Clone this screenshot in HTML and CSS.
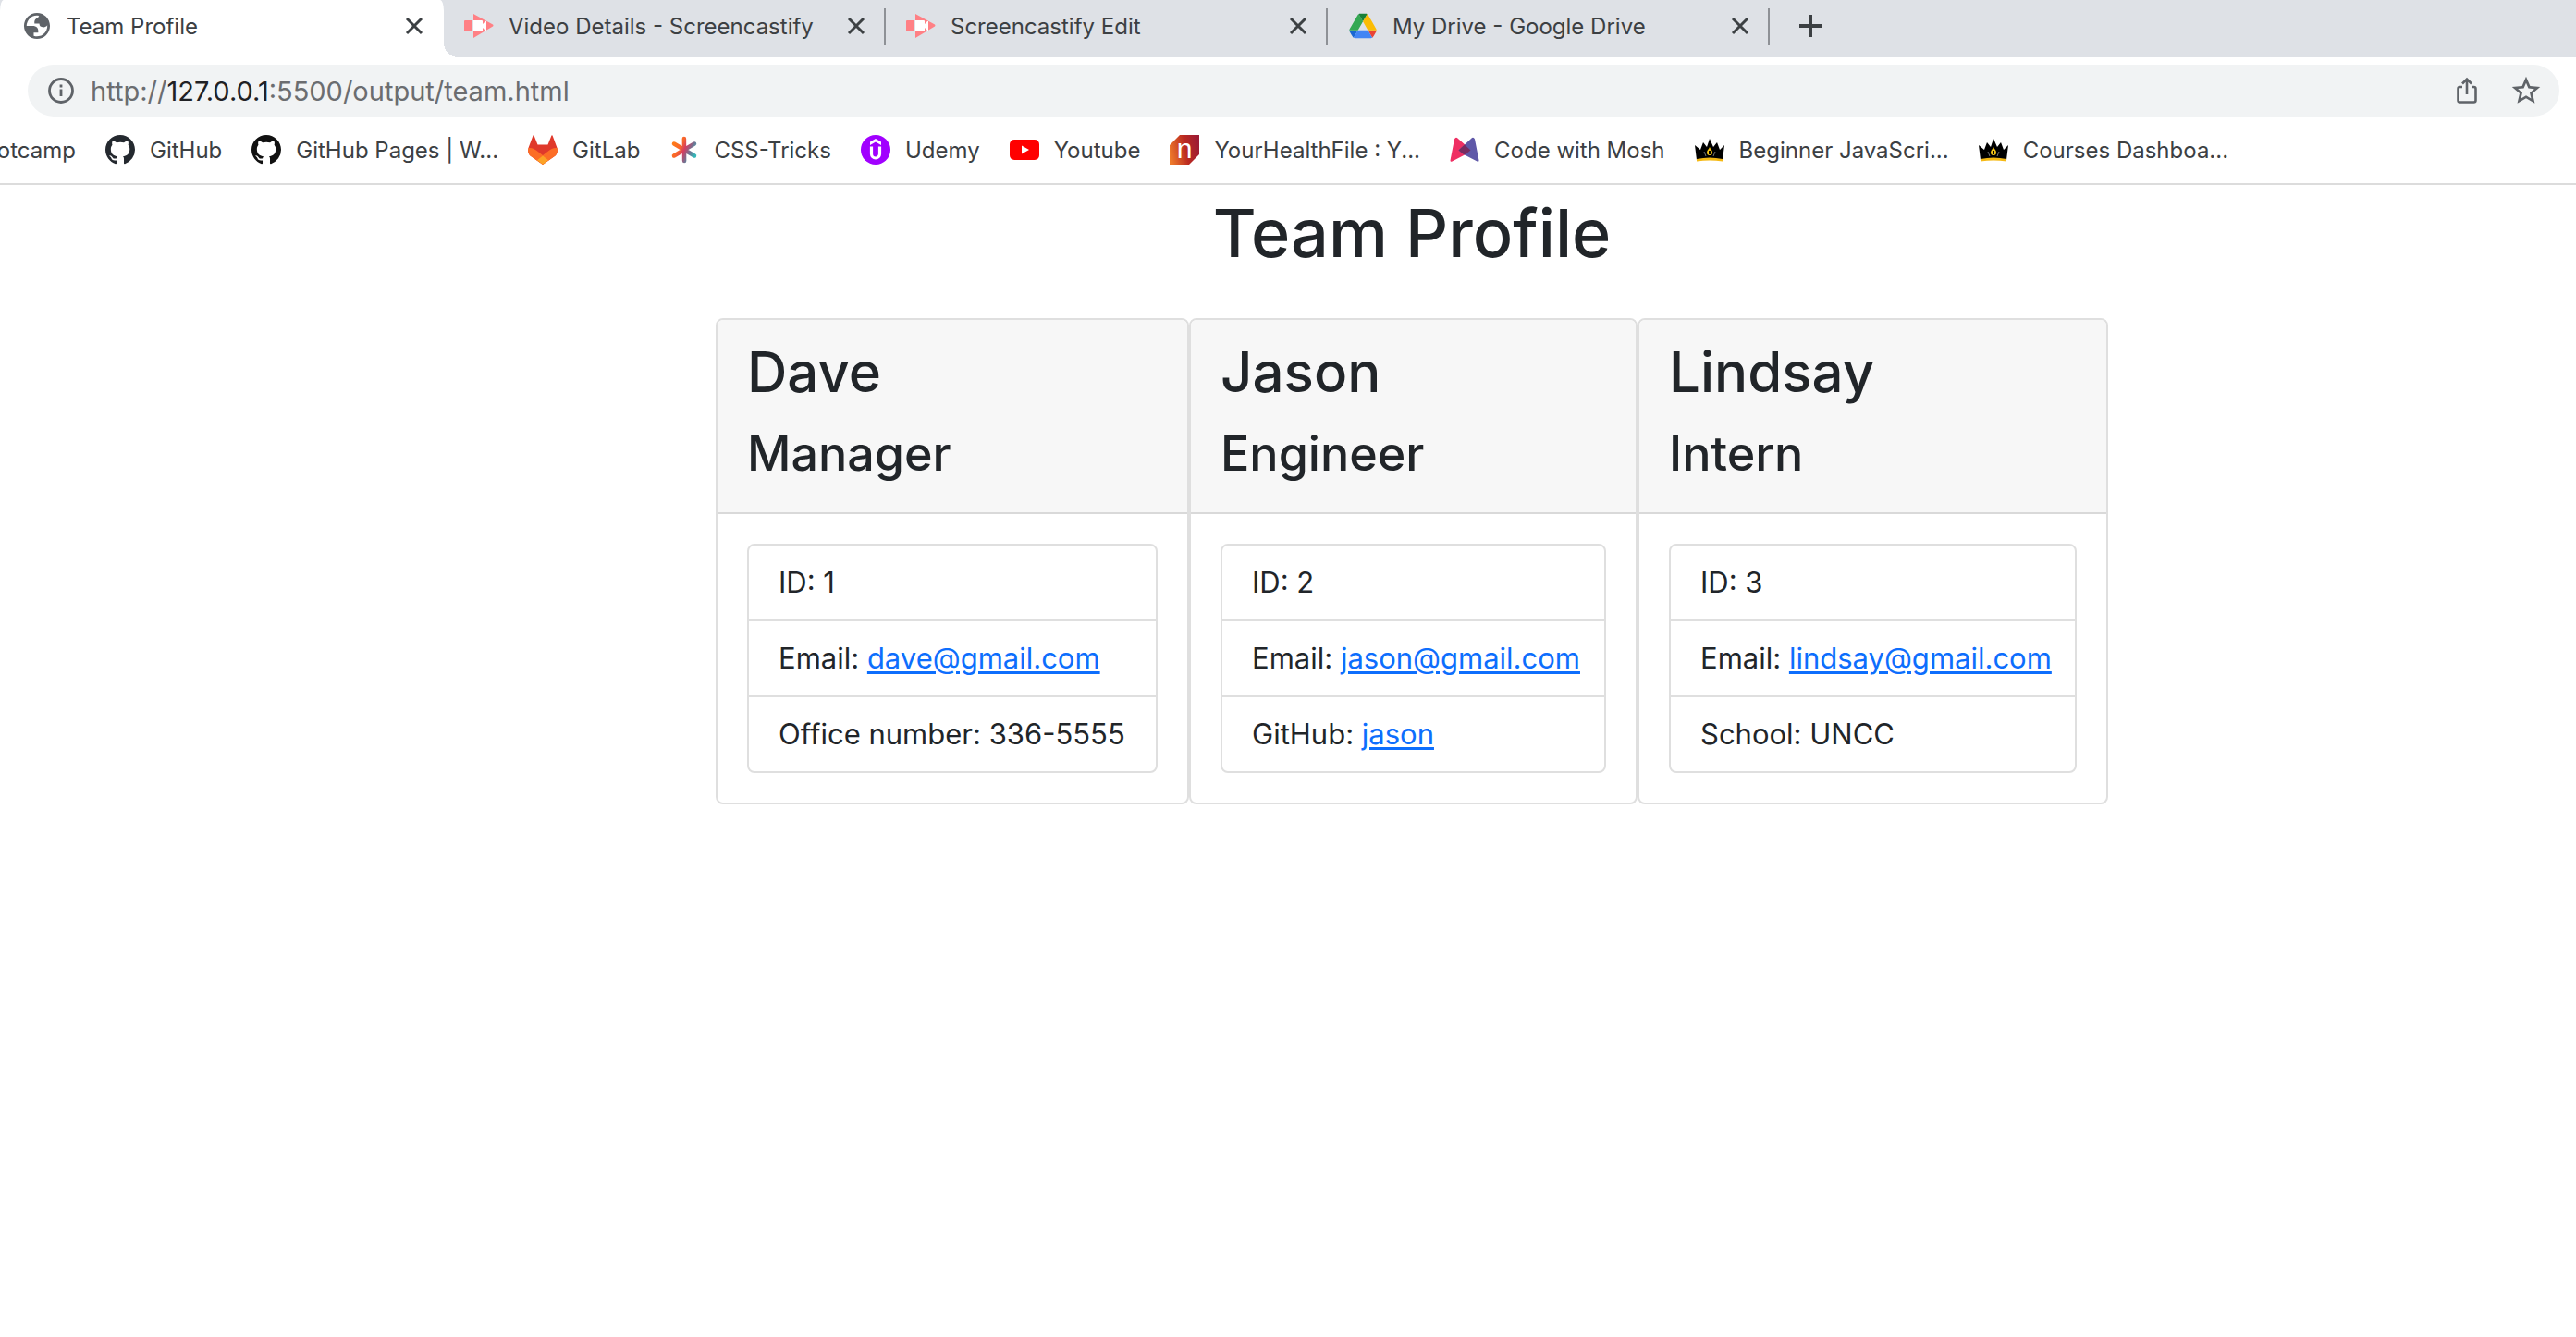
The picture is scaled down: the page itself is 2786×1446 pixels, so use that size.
FILE: index.html
```
<!DOCTYPE html>
<html lang="en">
<head>
  <meta charset="utf-8">
  <title>Team Profile</title>
  <link rel="stylesheet" href="styles.css">
</head>
<body>
  <svg class="sprite" aria-hidden="true">
    <symbol id="close" viewBox="0 0 32 32"><path d="M8 8l16 16M24 8L8 24" fill="none" stroke="#3c4043" stroke-width="3"/></symbol>
    <symbol id="github" viewBox="0 0 16 16"><path d="M8 0C3.58 0 0 3.58 0 8c0 3.54 2.29 6.53 5.47 7.59.4.07.55-.17.55-.38 0-.19-.01-.82-.01-1.49-2.01.37-2.53-.49-2.69-.94-.09-.23-.48-.94-.82-1.13-.28-.15-.68-.52-.01-.53.63-.01 1.08.58 1.23.82.72 1.21 1.87.87 2.33.66.07-.52.28-.87.51-1.07-1.78-.2-3.64-.89-3.64-3.95 0-.87.31-1.59.82-2.15-.08-.2-.36-1.02.08-2.12 0 0 .67-.21 2.2.82.64-.18 1.32-.27 2-.27s1.36.09 2 .27c1.53-1.04 2.2-.82 2.2-.82.44 1.1.16 1.92.08 2.12.51.56.82 1.27.82 2.15 0 3.07-1.87 3.75-3.65 3.95.29.25.54.73.54 1.48 0 1.07-.01 1.93-.01 2.2 0 .21.15.46.55.38A8.01 8.01 0 0 0 16 8c0-4.42-3.58-8-8-8z"/></symbol>
    <symbol id="cast" viewBox="0 0 32 32"><path fill="#ff8085" d="M1 10h8v12H1a1 1 0 0 1-1-1V11a1 1 0 0 1 1-1zM10 3l21 11.500q1 1 0 2L10 29z"/><path fill="#fff" d="M10 10h9q1 0 1 1v3l3-3h1v10h-1l-3-3v3q0 1-1 1h-9z"/></symbol>
    <symbol id="crown" viewBox="0 0 32 32"><path d="M0 11l6 5 3-8 4 5 3-9 4 9 4-5 3 8 5-5-2 16q-14-3-28 0z"/><path fill="#f5b914" d="M2 26q14-3 28 0v2.500q-14-2-28 0z"/><path fill="#f5c518" d="M16 13c1 2.500 3 3.500 3 6a3 3 0 0 1-6 0c0-2.500 2-3.500 3-6z"/><path d="M16 17v4" stroke="#000" stroke-width="2"/><path d="M10 18l2 5M22 18l-2 5" stroke="#777"/></symbol>
  </svg>

  <header class="browser">
    <nav class="tabs" aria-label="Open tabs">
      <div class="tab tab-active">
        <svg class="icon" viewBox="0.600 0.600 22.800 22.800"><path fill="#5f6368" fill-rule="evenodd" d="M12 2C6.480 2 2 6.480 2 12s4.480 10 10 10 10-4.480 10-10S17.520 2 12 2zM4 12h4.400c3.407.022 4.922 1.730 4.543 5.127H9.488v2.470a8.004 8.004 0 0 0 10.498-8.083C19.327 12.504 18.332 13 17 13c-2.137 0-3.206-.916-3.206-2.750h-3.748c-.274-2.728.683-4.092 2.870-4.092 0-.975.327-1.597.811-1.970A8.004 8.004 0 0 0 4 12z"/></svg>
        <span class="tab-title">Team Profile</span>
        <button class="tab-close" aria-label="Close Team Profile"><svg class="icon"><use href="#close"/></svg></button>
      </div>
      <div class="tab">
        <svg class="icon"><use href="#cast"/></svg>
        <span class="tab-title">Video Details - Screencastify</span>
        <button class="tab-close" aria-label="Close Video Details"><svg class="icon"><use href="#close"/></svg></button>
      </div>
      <div class="tab">
        <svg class="icon"><use href="#cast"/></svg>
        <span class="tab-title">Screencastify Edit</span>
        <button class="tab-close" aria-label="Close Screencastify Edit"><svg class="icon"><use href="#close"/></svg></button>
      </div>
      <div class="tab">
        <svg class="icon" viewBox="-4 -5 95 88"><path fill="#1967d2" d="m6.600 66.850 3.850 6.650c.8 1.400 1.950 2.500 3.300 3.300l13.750-23.800h-27.500c0 1.550.4 3.100 1.200 4.500z"/><path fill="#34a853" d="m43.650 25-13.750-23.800c-1.350.8-2.500 1.900-3.300 3.300l-25.400 44a9.060 9.060 0 0 0-1.200 4.500h27.500z"/><path fill="#ea4335" d="m73.550 76.800c1.350-.8 2.500-1.900 3.300-3.300l1.600-2.750 7.650-13.250c.8-1.400 1.200-2.950 1.200-4.500h-27.500z"/><path fill="#188038" d="m43.650 25 13.750-23.800c-1.350-.8-2.900-1.200-4.500-1.200h-18.500c-1.600 0-3.150.45-4.500 1.200z"/><path fill="#4285f4" d="m59.800 53h-32.300l-13.750 23.800c1.350.8 2.900 1.200 4.500 1.200h50.800c1.600 0 3.150-.45 4.500-1.200z"/><path fill="#fbbc04" d="m73.400 26.500-12.700-22c-.8-1.400-1.950-2.500-3.300-3.300l-13.750 23.800 16.150 28h27.450c0-1.550-.4-3.100-1.200-4.500z"/></svg>
        <span class="tab-title">My Drive - Google Drive</span>
        <button class="tab-close" aria-label="Close My Drive"><svg class="icon"><use href="#close"/></svg></button>
      </div>
      <button class="new-tab" aria-label="New tab"><svg class="icon" viewBox="0 0 32 32"><path d="M16 4v24M4 16h24" fill="none" stroke="#3c4043" stroke-width="4"/></svg></button>
    </nav>

    <div class="address-bar">
      <svg class="icon" viewBox="0 0 32 32"><circle cx="16" cy="16" r="12.500" fill="none" stroke="#5f6368" stroke-width="2.800"/><path d="M16 14.500v7.500M16 9.500v3" fill="none" stroke="#5f6368" stroke-width="2.800"/></svg>
      <div class="url" role="textbox" aria-label="Address" contenteditable="true" spellcheck="false">http://<span class="url-host">127.0.0.1</span>:5500/output/team.html</div>
      <button class="tool" aria-label="Share"><svg class="icon" viewBox="0 0 32 32"><path d="M11 12H8.500A2 2 0 0 0 6.500 14v12.500a2 2 0 0 0 2 2h15a2 2 0 0 0 2-2V14a2 2 0 0 0-2-2H21M16 20V4M11 8.500l5-5 5 5" fill="none" stroke="#5f6368" stroke-width="2.600"/></svg></button>
      <button class="tool" aria-label="Bookmark this tab"><svg class="icon" viewBox="1 1 22 22"><path fill="#5f6368" d="M22.500 9.200l-7.500-.65L12 1.500 9 8.560l-7.500.64 5.700 4.900-1.700 7.400 6.500-3.900 6.500 3.900-1.700-7.400 5.700-4.900zM12 15.600l-3.760 2.270 1-4.280-3.320-2.880 4.380-.38L12 6.300l1.710 4.040 4.380.38-3.320 2.880 1 4.280L12 15.600z"/></svg></button>
    </div>

    <nav class="bookmarks" aria-label="Bookmarks">
      <a class="bookmark bookmark-cut" href="#">Bootcamp</a>
      <a class="bookmark" href="#"><svg class="icon github-slate"><use href="#github"/></svg>GitHub</a>
      <a class="bookmark" href="#"><svg class="icon github-ink"><use href="#github"/></svg>GitHub Pages | W...</a>
      <a class="bookmark" href="#"><svg class="icon" viewBox="0 0 32 32"><path fill="#e0392b" d="M6.500.5L10.500 10.500h11L25.500.5q.5-.7 1 0L31.500 14c1 4 0 6.500-2 8.500L16 32 2.500 22.500c-2-2-3-4.500-2-8.500L5.500.5q.5-.7 1 0z"/><path fill="#fc6d26" d="M.5 14c4-.5 7 1.500 9 3l6.500 5 6.500-5c2-1.500 5-3.500 9-3 1 4 0 6.500-2 8.500L16 32 2.500 22.500c-2-2-3-4.500-2-8.500z"/><path fill="#fca326" d="M16 22.500l6 4.800L16 31.800l-6-4.500z"/></svg>GitLab</a>
      <a class="bookmark" href="#"><svg class="icon" viewBox="0 0 32 32"><defs><linearGradient id="star" gradientUnits="userSpaceOnUse" x1="4" y1="10" x2="28" y2="22"><stop offset="0" stop-color="#ff7a18"/><stop offset=".3" stop-color="#f9652b"/><stop offset=".5" stop-color="#d33c62"/><stop offset=".75" stop-color="#6e7694"/><stop offset="1" stop-color="#32b8b8"/></linearGradient></defs><path d="M15.900 4L16.100 28M5 9.500L27 22.500M27 9.500L5 22.500" fill="none" stroke="url(#star)" stroke-width="4.500" stroke-linecap="round"/></svg>CSS-Tricks</a>
      <a class="bookmark" href="#"><svg class="icon" viewBox="0 0 32 32"><circle cx="16" cy="16" r="16" fill="#a100ff"/><path fill="#fff" d="M16 4l6 3.500V11l-6-3.500L10 11V7.500z"/><path d="M11.500 12.500v8a4.500 4.500 0 0 0 9 0v-8" fill="none" stroke="#fff" stroke-width="3.200"/></svg>Udemy</a>
      <a class="bookmark" href="#"><svg class="icon" viewBox="0 0 32 32"><rect y="5" width="32" height="22" rx="5" fill="#f00"/><path fill="#fff" d="M13 11.500l8 4.500-8 4.500z"/></svg>Youtube</a>
      <a class="bookmark" href="#"><svg class="icon" viewBox="0 0 32 32"><defs><linearGradient id="ember" x1="0" y1=".6" x2="1" y2=".4"><stop offset="0" stop-color="#ee7a2b"/><stop offset=".55" stop-color="#bb2a20"/><stop offset="1" stop-color="#9c1b34"/></linearGradient></defs><path fill="url(#ember)" d="M11 0h21v21L21 32H0V11z"/><text class="logo-n" x="16" y="25" text-anchor="middle">n</text></svg>YourHealthFile : Y...</a>
      <a class="bookmark" href="#"><svg class="icon" viewBox="0 0 32 32"><path fill="#ef2f63" d="M5 4.500q1.500-3 4-.5L23 16.500l-6 4.500L2.500 28.500q-2 1-2-1z"/><path fill="#5f58a8" d="M27 4.500q-1.500-3-4-.5L9.500 16.500 15 21l14.500 7.500q2 1 2-1z"/><path fill="#772c61" d="M16 10.500l6.500 6-5.500 4.500h-2l-5.500-4.500z"/></svg>Code with Mosh</a>
      <a class="bookmark" href="#"><svg class="icon"><use href="#crown"/></svg>Beginner JavaScri...</a>
      <a class="bookmark" href="#"><svg class="icon"><use href="#crown"/></svg>Courses Dashboa...</a>
    </nav>
  </header>

  <main class="page">
    <h1 class="page-title">Team Profile</h1>
    <div class="cards">
      <section class="card">
        <div class="card-header">
          <h2 class="name">Dave</h2>
          <h3 class="role">Manager</h3>
        </div>
        <ul class="details">
          <li>ID: 1</li>
          <li>Email: <a href="mailto:dave@gmail.com">dave@gmail.com</a></li>
          <li>Office number: 336-5555</li>
        </ul>
      </section>
      <section class="card">
        <div class="card-header">
          <h2 class="name">Jason</h2>
          <h3 class="role">Engineer</h3>
        </div>
        <ul class="details">
          <li>ID: 2</li>
          <li>Email: <a href="mailto:jason@gmail.com">jason@gmail.com</a></li>
          <li>GitHub: <a href="https://github.com/jason">jason</a></li>
        </ul>
      </section>
      <section class="card">
        <div class="card-header">
          <h2 class="name">Lindsay</h2>
          <h3 class="role">Intern</h3>
        </div>
        <ul class="details">
          <li>ID: 3</li>
          <li>Email: <a href="mailto:lindsay@gmail.com">lindsay@gmail.com</a></li>
          <li>School: UNCC</li>
        </ul>
      </section>
    </div>
  </main>
</body>
</html>
```
FILE: styles.css
```
* {
  box-sizing: border-box;
}

body {
  margin: 0;
  background: #fff;
  color: #212529;
  font-family: Inter, "Liberation Sans", sans-serif;
}

button {
  padding: 0;
  border: 0;
  background: none;
}

.sprite {
  display: none;
}

.icon {
  display: block;
  flex: none;
  width: 32px;
  height: 32px;
  overflow: visible;
}

/* Tab strip */
.tabs {
  display: flex;
  height: 62px;
  background: #dee1e6;
}

.tab {
  position: relative;
  display: flex;
  align-items: center;
  gap: 16px;
  width: 478px;
  padding: 0 16px 6px 22px;
  color: #3c4043;
  font-size: 24px;
}

.tab-active {
  width: 480px;
  padding-left: 24px;
  border-radius: 4px 4px 0 0 / 12px 12px 0 0;
  background: #fff;
}

/* Curved foot of the active tab */
.tab-active::after {
  content: "";
  position: absolute;
  bottom: 0;
  left: 100%;
  width: 16px;
  height: 16px;
  background: radial-gradient(circle at top right, transparent 16px, #fff 16px);
}

/* Divider after each inactive tab */
.tab:not(.tab-active)::after {
  content: "";
  position: absolute;
  top: 9px;
  right: 0;
  width: 2px;
  height: 40px;
  background: #8e9196;
}

.tab-title {
  flex: 1;
  overflow: hidden;
  white-space: nowrap;
}

.new-tab {
  height: 56px;
  margin-left: 28px;
}

/* Address bar */
.address-bar {
  display: flex;
  align-items: center;
  height: 56px;
  margin: 8px 18px 0 30px;
  padding: 0 20px;
  border-radius: 28px;
  background: #f1f3f4;
}

.url {
  flex: 1;
  margin-left: 16px;
  color: #6b6d70;
  font-size: 29px;
  white-space: nowrap;
}

.url-host {
  color: #202124;
}

.tool {
  margin-left: 32px;
}

/* Bookmarks */
.bookmarks {
  display: flex;
  align-items: center;
  gap: 32px;
  height: 74px;
  overflow: hidden;
  border-bottom: 2px solid #dcdcdc;
}

.bookmark {
  display: flex;
  flex: none;
  align-items: center;
  gap: 16px;
  color: #3c4043;
  font-size: 24px;
  text-decoration: none;
  white-space: nowrap;
}

.bookmark-cut {
  justify-content: flex-end;
  width: 82px;
}

.github-slate {
  fill: #24292f;
}

.github-ink {
  fill: #111;
}

.logo-n {
  fill: #fff;
  font-family: "Liberation Sans", sans-serif;
  font-size: 30px;
}

/* Team page */
.page {
  padding: 4px 0 0 268px;
}

.page-title {
  margin: 0 0 44px;
  font-size: 72px;
  font-weight: 500;
  line-height: 96px;
  text-align: center;
}

.cards {
  display: grid;
  grid-template-columns: 512fr 485fr 509fr;
  width: 100%;
  max-width: 1506px;
  margin: 0 auto;
}

.card {
  min-width: 0;
  border: 2px solid #dfdfdf;
  border-radius: 8px;
}

.card-header {
  padding: 18px 32px 30px;
  border-bottom: 2px solid #d9d9d9;
  border-radius: 6px 6px 0 0;
  background: #f7f7f7;
}

.name,
.role {
  margin: 0;
  font-weight: 500;
}

.name {
  margin-bottom: 16px;
  font-size: 60px;
  line-height: 77px;
}

.role {
  font-size: 52px;
  line-height: 67px;
}

.details {
  margin: 32px;
  padding: 0;
  border: 2px solid #dfdfdf;
  border-radius: 8px;
  list-style: none;
}

.details li {
  padding: 16px 32px;
  font-size: 31px;
  line-height: 48px;
  white-space: nowrap;
}

.details li + li {
  border-top: 2px solid #dfdfdf;
}

.details a {
  color: #0d6efd;
  text-decoration-thickness: 3px;
  text-underline-offset: 3px;
}
```
